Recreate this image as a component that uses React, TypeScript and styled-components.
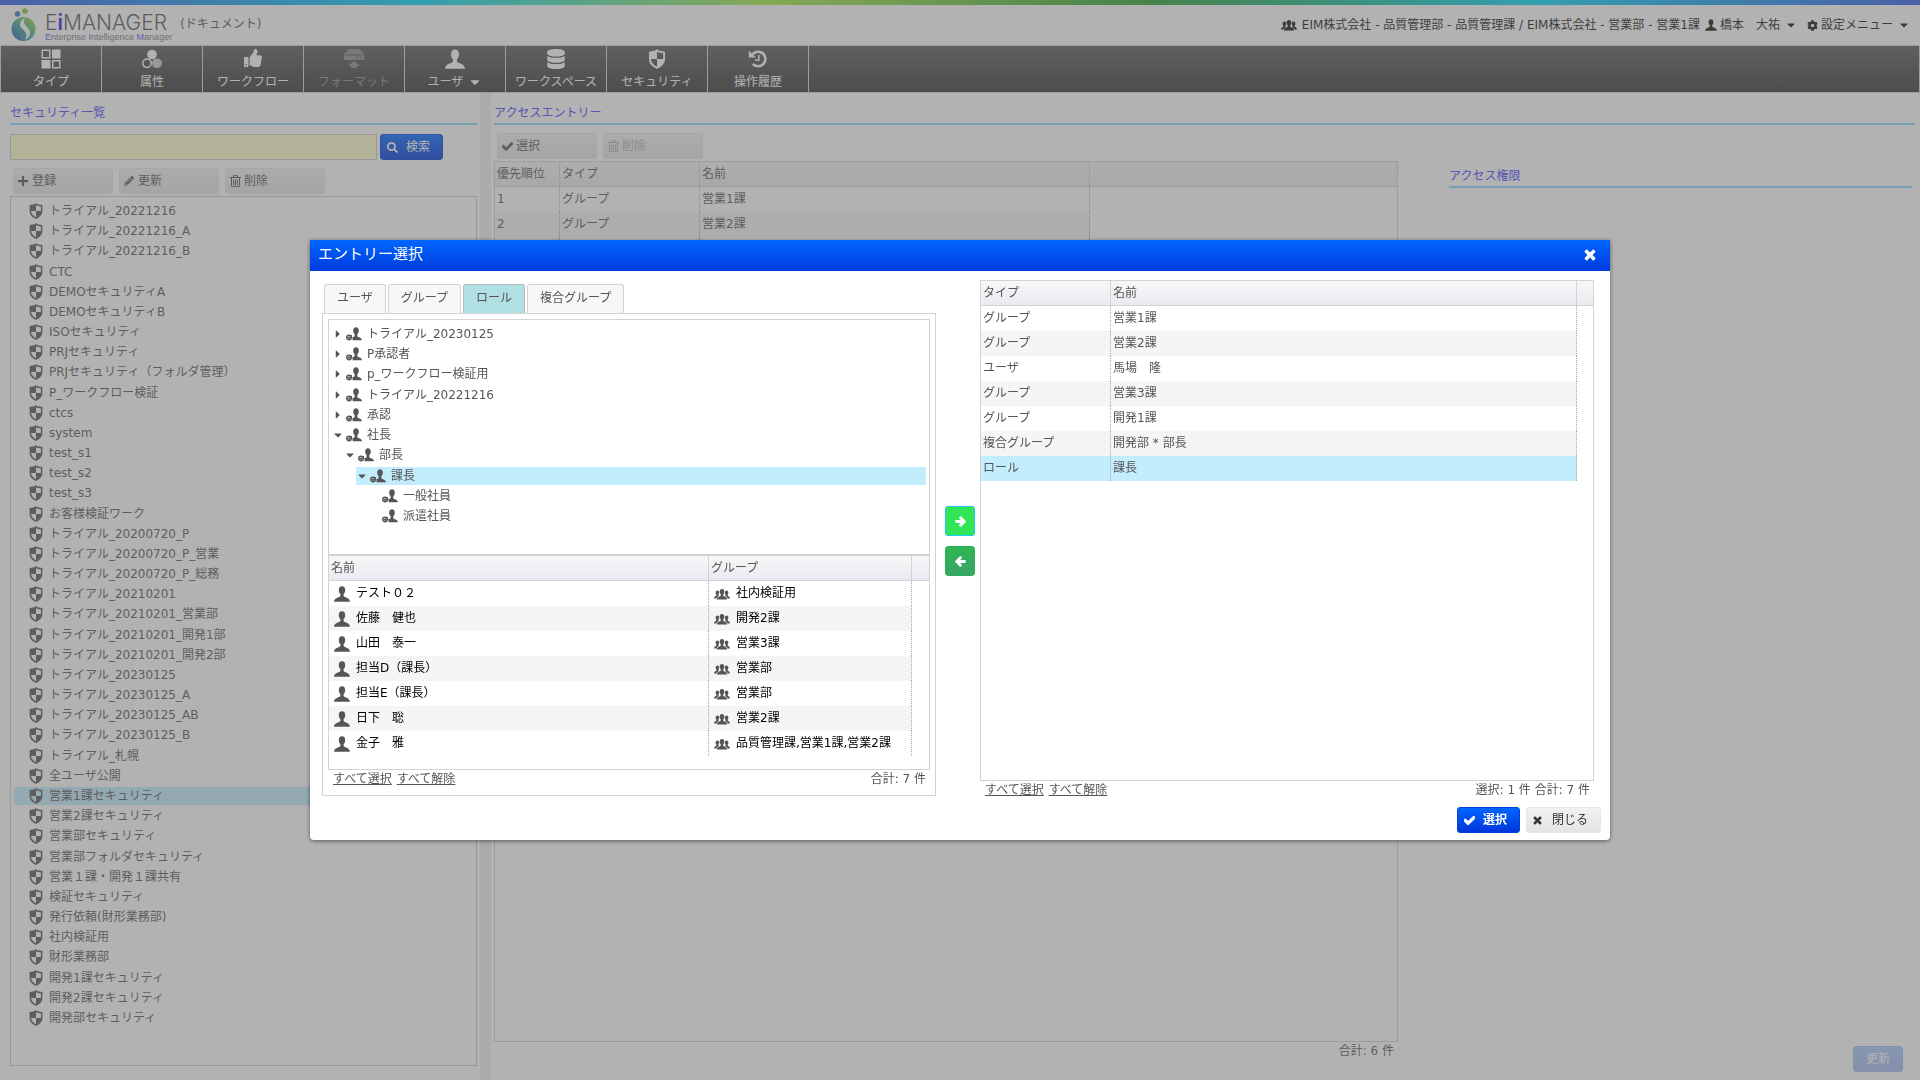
import React, { useState } from "react";
import styled, { createGlobalStyle, css } from "styled-components";
import {
  FaArrowLeft,
  FaArrowRight,
  FaCaretDown,
  FaCaretRight,
  FaCheck,
  FaCog,
  FaDatabase,
  FaPencilAlt,
  FaPlus,
  FaSearch,
  FaThumbsUp,
} from "react-icons/fa";

const GlobalStyle = createGlobalStyle`
  *, *::before, *::after { box-sizing: border-box; }
  body {
    margin: 0;
    background: #fff;
    color: #555;
    font: 12px/18px "DejaVu Sans", "Noto Sans CJK JP", sans-serif;
  }
  button, input { font: inherit; color: inherit; }
  button { cursor: pointer; }
  ul { list-style: none; margin: 0; padding: 0; }
  h1, h2 { margin: 0; font-size: 12px; font-weight: 400; }
  svg { display: block; flex: none; }
`;

/* ---------- icons ---------- */

const ShieldIcon = ({ size = 16 }: { size?: number }) => (
  <svg width={size} height={size} viewBox="0 0 16 16" fill="currentColor">
    <path
      fillRule="evenodd"
      d="M8 0l1.500 1.200 4.900.9V8c0 3.700-2.600 6.200-6.400 8-3.800-1.800-6.400-4.300-6.400-8V2.100l4.900-.9zM8 2.200V8h4.900V3.400L9.400 2.800zM8 8H3.100c.2 2.700 2.100 4.700 4.900 6.200z"
    />
  </svg>
);

const UserIcon = ({ size = 16 }: { size?: number }) => (
  <svg width={size} height={size} viewBox="0 0 16 16" fill="currentColor">
    <path d="M8 .3c2.100 0 3.200 1.600 3.200 3.900 0 1.700-.7 3.200-1.600 3.900v1.500c0 .7.5 1.100 1.200 1.400 2.600 1 4.800 1.700 5.200 4.700H0c.4-3 2.600-3.700 5.200-4.700.7-.3 1.200-.7 1.200-1.400V8.100C5.500 7.400 4.800 5.900 4.800 4.200 4.800 1.900 5.900.3 8 .3z" />
  </svg>
);

const GroupIcon = () => (
  <svg width="16" height="11" viewBox="0 0 16 11" fill="currentColor">
    <path d="M8 0c1.600 0 2.300 1.200 2.300 2.700 0 1.100-.4 2-1 2.600v1.200c0 .4.3.6.7.8 1.600.6 3 1.100 3.200 3.200H2.800c.2-2.100 1.600-2.600 3.200-3.200.4-.2.7-.4.7-.8V5.300c-.6-.6-1-1.500-1-2.600C5.700 1.200 6.400 0 8 0z" />
    <path d="M3.400 1.400c1.200 0 1.800 1 1.800 2.200 0 .9-.3 1.500-.7 1.900v1c0 .3.2.5.5.6-1.200.5-2 1.100-2.500 2.400H0c.2-1.600 1-2 1.800-2.400.4-.2.5-.3.500-.6v-1c-.4-.4-.7-1-.7-1.900 0-1.200.6-2.200 1.800-2.200zM12.600 1.400c1.200 0 1.800 1 1.800 2.200 0 .9-.3 1.500-.7 1.900v1c0 .3.1.4.5.6.8.4 1.600.8 1.800 2.400h-2.500c-.5-1.300-1.300-1.900-2.500-2.400.3-.1.500-.3.500-.6v-1c-.4-.4-.7-1-.7-1.900 0-1.200.6-2.200 1.800-2.200z" />
  </svg>
);

const RoleIcon = () => (
  <svg width="16" height="14" viewBox="0 0 16 14" fill="currentColor">
    <path d="M10 .3c1.800 0 2.800 1.400 2.800 3.400 0 1.400-.6 2.600-1.400 3.200V9c0 .5.4.9 1 1.100 1.600.6 3.400 1.200 3.600 3.200H6.500c.3-1.100.1-2.200-.4-2.900.9-.4 2.500-.8 2.500-1.400V6.900C7.800 6.300 7.200 5.100 7.200 3.700 7.200 1.700 8.200.3 10 .3z" />
    <circle cx="3" cy="10.500" r="2.300" fill="none" stroke="currentColor" strokeWidth="1.400" />
    <path d="M1.800 10l1.300 1.300 2.700-3.100" fill="none" stroke="currentColor" strokeWidth="1.300" />
  </svg>
);

const TypeIcon = () => (
  <svg width="20" height="20" viewBox="0 0 20 20" fill="currentColor">
    <path fillRule="evenodd" d="M.5.5h9v9h-9zM2 2v6h6V2zM11 .5h8.500v9H11zM.5 11h9v8.500h-9zM11 11h8.500v8.500H11zM12.500 12.500V18H18v-5.500z" />
  </svg>
);

const AttributeIcon = () => (
  <svg width="20" height="20" viewBox="0 0 20 20">
    <circle cx="10" cy="5.500" r="4.800" fill="currentColor" />
    <circle cx="5" cy="14.300" r="4.200" fill="none" stroke="currentColor" strokeWidth="1.500" />
    <circle cx="15" cy="14.300" r="4.900" fill="currentColor" opacity=".7" />
  </svg>
);

const FormatIcon = () => (
  <svg width="20" height="20" viewBox="0 0 20 20" fill="currentColor">
    <path fillRule="evenodd" d="M4.500 0h11L20 5.500v4.500c0 .6-.4 1-1 1H1c-.6 0-1-.4-1-1V5.500zM1 5.500v1h18v-1zM12.500 8v1.500H14V8zM16 8v1.500h1.500V8z" />
    <path d="M10 12l6 5h-3v2H7v-2H4z" />
  </svg>
);

const HistoryIcon = () => (
  <svg width="20" height="20" viewBox="0 0 20 20" fill="none" stroke="currentColor">
    <path d="M4.500 5.300A7.300 7.300 0 1 1 4.800 15" strokeWidth="2.600" />
    <path d="M.8 1.500v7h7z" fill="currentColor" stroke="none" />
    <path d="M10.800 6v5.200H7" strokeWidth="1.600" />
  </svg>
);

const TrashIcon = () => (
  <svg width="11" height="12" viewBox="0 0 11 12" fill="none" stroke="currentColor">
    <path d="M0 2.500h11M3.500 2.500V.6h4v1.900M1.500 3v8.400h8V3M3.700 4.500V10M5.500 4.500V10M7.300 4.500V10" />
  </svg>
);

const TimesIcon = ({ size = 11 }: { size?: number }) => (
  <svg width={size} height={size} viewBox="240 370 1310 1180" fill="currentColor">
    <path d="M1490 1322q0 40-28 68l-136 136q-28 28-68 28t-68-28l-294-294-294 294q-28 28-68 28t-68-28l-136-136q-28-28-28-68t28-68l294-294-294-294q-28-28-28-68t28-68l136-136q28-28 68-28t68 28l294 294 294-294q28-28 68-28t68 28l136 136q28 28 28 68t-28 68l-294 294 294 294q28 28 28 68z" />
  </svg>
);

const LogoMark = () => (
  <svg width="26" height="34" viewBox="0 0 26 34">
    <defs>
      <linearGradient id="orb" x1="0" y1="1" x2="1" y2="0">
        <stop offset="0" stopColor="#2458b8" />
        <stop offset=".5" stopColor="#3fa79a" />
        <stop offset="1" stopColor="#b4dc1e" />
      </linearGradient>
    </defs>
    <circle cx="6.500" cy="6" r="2.800" fill="#3c7cc0" />
    <circle cx="14" cy="3" r="2.800" fill="#93c52b" />
    <circle cx="12.500" cy="21" r="12" fill="url(#orb)" />
    <path d="M14 10C9 12 7.500 17 11 20.500c4 3.500 6 6 3 11 5-2 6.500-7 3.500-10.800C14 17 11.500 15 14 10z" fill="#fff" />
  </svg>
);

/* ---------- page frame ---------- */

const Page = styled.div`
  min-height: 100vh;
  display: flex;
  flex-direction: column;
`;

const Rainbow = styled.div`
  height: 5px;
  background: linear-gradient(90deg, #305ae8, #00d8fa 22%, #a8ea44 40%, #28a030 60%, #00d8fa 80%, #305ae8);
`;

const Header = styled.header`
  display: flex;
  align-items: center;
  justify-content: space-between;
  height: 40px;
  padding: 0 10px 0 11px;
  color: #111;
`;

const Brand = styled.div`
  display: flex;
  align-items: center;
  gap: 8px;
`;

const BrandText = styled.div`
  display: grid;
  padding-top: 6px;
  color: #555;
`;

const BrandName = styled.span`
  font: 300 21px/18px Inter, sans-serif;
  b { font-weight: 600; color: #3a1fd0; }
`;

const BrandTag = styled.span`
  font: 9px/10px "Liberation Sans", sans-serif;
  color: #777;
  b { font-weight: 400; color: #5a4ff0; }
`;

const BrandMode = styled.span`
  color: #555;
  padding-bottom: 2px;
`;

const Account = styled.div`
  display: flex;
  align-items: center;
  gap: 5px;
`;

const PlainButton = styled.button`
  display: flex;
  align-items: center;
  gap: 3px;
  padding: 0;
  border: 0;
  background: none;
  svg:last-child { margin-left: 2px; }
  & + & { margin-left: 5px; }
`;

const Menu = styled.nav`
  display: flex;
  height: 48px;
  border: 1px solid #d5d5d5;
  border-width: 1px 1px 1px 0;
  background: linear-gradient(#5a5a5a, #343434);
`;

const MenuItem = styled.button`
  display: grid;
  grid-template-rows: 20px 18px;
  justify-items: center;
  align-content: center;
  gap: 4px;
  width: 101px;
  padding: 2px 0 0;
  border: 0;
  border-left: 1px solid #d5d5d5;
  background: none;
  color: #fff;
  white-space: nowrap;
  &:disabled { color: #8c8c8c; }
  &:last-of-type { width: 102px; border-right: 1px solid #d5d5d5; }
`;

const MenuLabel = styled.span`
  display: flex;
  align-items: center;
  gap: 5px;
`;

const Main = styled.main`
  flex: 1;
  display: grid;
  grid-template-columns: 480px 11px minmax(0, 1fr);
`;

const Splitter = styled.div`
  background: #f0f0f0;
`;

const Title = styled.h2`
  height: 24px;
  line-height: 18px;
  padding-top: 3px;
  border-bottom: 2px solid #82daff;
  color: #4444ff;
`;

const Side = styled.section`
  display: flex;
  flex-direction: column;
  padding: 8px 3px 14px 10px;
`;

const raised = css`
  background: linear-gradient(#f0f2f2, #e4e4e4);
  border: 1px solid #e6e6e6;
  border-radius: 3px;
`;

const primary = css`
  background: linear-gradient(#0066ff, #0036d9);
  border: 1px solid #0040d8;
  border-radius: 3px;
  color: #fff;
`;

const SearchRow = styled.form`
  display: flex;
  gap: 3px;
  margin-top: 9px;
`;

const SearchInput = styled.input`
  width: 367px;
  height: 26px;
  padding: 0 4px;
  border: 1px solid #ccc;
  background: #ffffcc;
`;

const ActionButton = styled.button<{ $primary?: boolean; $bold?: boolean }>`
  display: flex;
  align-items: center;
  gap: ${(p) => (p.$primary ? 8 : 10)}px;
  height: 26px;
  padding: 0 12px 0 6px;
  ${(p) => (p.$primary ? primary : raised)}
  color: ${(p) => (p.$primary ? "#fff" : "#333")};
  font-weight: ${(p) => (p.$bold ? 700 : 400)};
`;

const SaveButton = styled.button`
  ${primary}
  height: 26px;
  padding: 0 12px;
  opacity: 0.35;
`;

const Toolbar = styled.div<{ $gap: number }>`
  display: flex;
  gap: 6px;
  margin-top: ${(p) => p.$gap}px;
  padding-left: 3px;
`;

const ToolButton = styled.button`
  ${raised}
  display: flex;
  align-items: center;
  gap: 3px;
  width: 100px;
  height: 26px;
  padding: 0 3px;
  &:disabled { color: #b4b4b4; }
`;

const ToolIcon = styled.span`
  display: grid;
  place-items: center;
  width: 12px;
`;

const ListBox = styled.div`
  flex: 1;
  margin-top: 2px;
  padding: 5px 3px 38px;
  border: 1px solid #ccc;
`;

const SecurityList = styled.ul`
  display: flex;
  flex-direction: column;
  justify-content: space-between;
  height: 100%;
`;

const ListRow = styled.button<{ $selected: boolean }>`
  display: flex;
  align-items: center;
  gap: 5px;
  width: 100%;
  height: 18px;
  padding: 0 0 0 14px;
  border: 0;
  background: ${(p) => (p.$selected ? "#c3edfc" : "none")};
`;

const Entry = styled.section`
  display: flex;
  flex-direction: column;
  padding: 8px 5px 38px 3px;
`;

const EntryColumns = styled.div`
  flex: 1;
  display: grid;
  grid-template-columns: minmax(0, 904px) minmax(0, 1fr);
  gap: 51px;
  padding-right: 3px;
`;

const EntryTable = styled.div`
  display: flex;
  flex-direction: column;
  margin-bottom: -18px;
`;

const Rights = styled.div`
  display: flex;
  flex-direction: column;
  justify-content: space-between;
  margin-bottom: -30px;
  padding-top: 39px;
`;

const RightsFoot = styled.div`
  display: flex;
  justify-content: flex-end;
  padding-right: 9px;
`;

/* ---------- tables ---------- */

const TableBox = styled.div<{ $height?: number; $gap?: number }>`
  ${(p) => (p.$height ? `height: ${p.$height}px;` : "flex: 1;")}
  margin-top: ${(p) => p.$gap ?? 0}px;
  border: 1px solid #d3d3d3;
  background: #fff;
`;

const Grid = styled.table`
  width: 100%;
  table-layout: fixed;
  border-collapse: separate;
  border-spacing: 0;
`;

const HeadCell = styled.th<{ $width?: number }>`
  width: ${(p) => (p.$width ? `${p.$width}px` : "auto")};
  height: 25px;
  padding: 0 2px;
  border: 0 solid #d3d3d3;
  border-width: 0 1px 1px 0;
  background: linear-gradient(#f7f7f8, #e9ebf0);
  font-weight: 400;
  text-align: left;
  &:last-child { border-right: 0; }
`;

const BodyRow = styled.tr<{ $selected?: boolean; $dark?: boolean }>`
  color: ${(p) => (p.$dark ? "#000" : "inherit")};
  &:nth-child(even) td:not(:last-child) { background: #f5f5f5; }
  ${(p) => p.$selected && css`td:not(:last-child) { background: #c3edfc; }`}
`;

const Cell = styled.td`
  height: 25px;
  padding: 0 2px 2px;
  border-right: 1px dotted #aaa;
  white-space: nowrap;
  &:last-child { border-right: 0; }
`;

const IconText = styled.span<{ $gap: number }>`
  display: flex;
  align-items: center;
  gap: ${(p) => p.$gap}px;
  padding-left: 3px;
  svg { color: #555; margin-top: 3px; }
`;

const Foot = styled.div<{ $tall?: boolean }>`
  display: flex;
  justify-content: space-between;
  padding: 0 4px ${(p) => (p.$tall ? 2 : 0)}px 5px;
`;

const FootEnd = styled.div`
  padding-right: 4px;
  text-align: right;
`;

const FootLinks = styled.div`
  display: flex;
  gap: 5px;
  a { color: #555; }
`;

/* ---------- dialog ---------- */

const Overlay = styled.div`
  position: fixed;
  inset: 0;
  display: flex;
  align-items: center;
  justify-content: center;
  background: rgba(102, 102, 102, 0.5);
`;

const Dialog = styled.div`
  width: min(1300px, 100%);
  border-radius: 0 0 4px 4px;
  background: #fff;
  box-shadow: 0 1px 4px rgba(0, 0, 0, 0.5);
`;

const DialogHead = styled.div`
  display: flex;
  align-items: center;
  justify-content: space-between;
  height: 31px;
  padding: 0 14px 4px 8px;
  background: linear-gradient(#0066ff, #003bdc);
  color: #fff;
  h1 { font-size: 15px; line-height: 24px; }
`;

const CloseButton = styled.button`
  padding: 3px 0 0;
  border: 0;
  background: none;
`;

const DialogBody = styled.div`
  display: grid;
  grid-template-columns: minmax(0, 1fr) 44px minmax(0, 1fr);
  padding: 9px 16px 0 12px;
`;

const Source = styled.div`
  padding-top: 4px;
`;

const Tabs = styled.div`
  display: flex;
  gap: 2px;
  padding-left: 2px;
`;

const Tab = styled.button<{ $active: boolean }>`
  height: 29px;
  padding: 0 12px 2px;
  border: 1px solid ${(p) => (p.$active ? "#b9b9b9" : "#d3d3d3")};
  border-bottom: 0;
  border-radius: 3px 3px 0 0;
  background: ${(p) => (p.$active ? "#b0dfe4" : "#f6f7f9")};
`;

const TabPanel = styled.div`
  padding: 5px;
  border: 1px solid #d3d3d3;
`;

const TreeBox = styled.div`
  height: 236px;
  padding: 5px 3px;
  border: 1px solid #d3d3d3;
`;

const Tree = styled.ul`
  display: flex;
  flex-direction: column;
  justify-content: space-between;
  height: 200px;
`;

const TreeItem = styled.li<{ $depth: number }>`
  padding-left: ${(p) => p.$depth * 12}px;
`;

const TreeRow = styled.button<{ $selected: boolean }>`
  display: flex;
  align-items: center;
  width: 100%;
  height: 18px;
  padding: 0;
  border: 0;
  background: ${(p) => (p.$selected ? "#c3edfc" : "none")};
`;

const Twisty = styled.span`
  display: grid;
  place-items: center;
  width: 12px;
  height: 12px;
  margin-right: 2px;
`;

const TreeLabel = styled.span`
  margin-left: 5px;
`;

const Movers = styled.div`
  display: flex;
  flex-direction: column;
  gap: 10px;
  padding: 226px 5px 0 9px;
`;

const MoveButton = styled.button<{ $focus?: boolean }>`
  display: grid;
  place-items: center;
  height: 30px;
  padding: 0;
  border: 1px solid ${(p) => (p.$focus ? "#1fc8f5" : "#30ad55")};
  border-radius: 3px;
  background: ${(p) => (p.$focus ? "#30e657" : "linear-gradient(#30b454, #38a669)")};
  color: #fff;
`;

const DialogActions = styled.div`
  display: flex;
  justify-content: flex-end;
  gap: 6px;
  padding: 8px 9px 7px;
`;

/* ---------- data ---------- */

const securities = [
  "トライアル_20221216", "トライアル_20221216_A", "トライアル_20221216_B", "CTC",
  "DEMOセキュリティA", "DEMOセキュリティB", "ISOセキュリティ", "PRJセキュリティ",
  "PRJセキュリティ（フォルダ管理）", "P_ワークフロー検証", "ctcs", "system",
  "test_s1", "test_s2", "test_s3", "お客様検証ワーク", "トライアル_20200720_P",
  "トライアル_20200720_P_営業", "トライアル_20200720_P_総務", "トライアル_20210201",
  "トライアル_20210201_営業部", "トライアル_20210201_開発1部", "トライアル_20210201_開発2部",
  "トライアル_20230125", "トライアル_20230125_A", "トライアル_20230125_AB",
  "トライアル_20230125_B", "トライアル_札幌", "全ユーザ公開", "営業1課セキュリティ",
  "営業2課セキュリティ", "営業部セキュリティ", "営業部フォルダセキュリティ",
  "営業１課・開発１課共有", "検証セキュリティ", "発行依頼(財形業務部)", "社内検証用",
  "財形業務部", "開発1課セキュリティ", "開発2課セキュリティ", "開発部セキュリティ",
];

const roles: { name: string; depth: number; state: "closed" | "open" | "leaf" }[] = [
  { name: "トライアル_20230125", depth: 0, state: "closed" },
  { name: "P承認者", depth: 0, state: "closed" },
  { name: "p_ワークフロー検証用", depth: 0, state: "closed" },
  { name: "トライアル_20221216", depth: 0, state: "closed" },
  { name: "承認", depth: 0, state: "closed" },
  { name: "社長", depth: 0, state: "open" },
  { name: "部長", depth: 1, state: "open" },
  { name: "課長", depth: 2, state: "open" },
  { name: "一般社員", depth: 3, state: "leaf" },
  { name: "派遣社員", depth: 3, state: "leaf" },
];

const members = [
  ["テスト０２", "社内検証用"],
  ["佐藤　健也", "開発2課"],
  ["山田　泰一", "営業3課"],
  ["担当D（課長）", "営業部"],
  ["担当E（課長）", "営業部"],
  ["日下　聡", "営業2課"],
  ["金子　雅", "品質管理課,営業1課,営業2課"],
];

const chosen = [
  ["グループ", "営業1課"],
  ["グループ", "営業2課"],
  ["ユーザ", "馬場　隆"],
  ["グループ", "営業3課"],
  ["グループ", "開発1課"],
  ["複合グループ", "開発部 * 部長"],
  ["ロール", "課長"],
];

const entries = chosen.slice(0, 3);

const menu: { label: string; icon: React.ReactNode; caret?: boolean; disabled?: boolean }[] = [
  { label: "タイプ", icon: <TypeIcon /> },
  { label: "属性", icon: <AttributeIcon /> },
  { label: "ワークフロー", icon: <FaThumbsUp size={18} /> },
  { label: "フォーマット", icon: <FormatIcon />, disabled: true },
  { label: "ユーザ", icon: <UserIcon size={20} />, caret: true },
  { label: "ワークスペース", icon: <FaDatabase size={20} /> },
  { label: "セキュリティ", icon: <ShieldIcon size={20} /> },
  { label: "操作履歴", icon: <HistoryIcon /> },
];

const tabs = ["ユーザ", "グループ", "ロール", "複合グループ"];

const SelectLinks = () => (
  <FootLinks>
    <a href="#all">すべて選択</a>
    <a href="#none">すべて解除</a>
  </FootLinks>
);

const EntryDialog = () => {
  const [tab, setTab] = useState("ロール");
  const [role, setRole] = useState("課長");
  return (
    <Dialog role="dialog" aria-modal="true" aria-labelledby="entry-title">
      <DialogHead>
        <h1 id="entry-title">エントリー選択</h1>
        <CloseButton aria-label="閉じる"><TimesIcon size={12} /></CloseButton>
      </DialogHead>
      <DialogBody>
        <Source>
          <Tabs role="tablist">
            {tabs.map((name) => (
              <Tab key={name} role="tab" aria-selected={tab === name} $active={tab === name} onClick={() => setTab(name)}>
                {name}
              </Tab>
            ))}
          </Tabs>
          <TabPanel role="tabpanel">
            <TreeBox>
              <Tree>
                {roles.map((r) => (
                  <TreeItem key={r.name} $depth={r.depth}>
                    <TreeRow $selected={role === r.name} onClick={() => setRole(r.name)}>
                      <Twisty>
                        {r.state === "closed" && <FaCaretRight size={12} />}
                        {r.state === "open" && <FaCaretDown size={12} />}
                      </Twisty>
                      <RoleIcon />
                      <TreeLabel>{r.name}</TreeLabel>
                    </TreeRow>
                  </TreeItem>
                ))}
              </Tree>
            </TreeBox>
            <TableBox $height={215}>
              <Grid>
                <thead>
                  <tr>
                    <HeadCell>名前</HeadCell>
                    <HeadCell $width={203}>グループ</HeadCell>
                    <HeadCell $width={17} />
                  </tr>
                </thead>
                <tbody>
                  {members.map(([name, group]) => (
                    <BodyRow key={name} $dark>
                      <Cell><IconText $gap={6}><UserIcon />{name}</IconText></Cell>
                      <Cell><IconText $gap={6}><GroupIcon />{group}</IconText></Cell>
                      <Cell />
                    </BodyRow>
                  ))}
                </tbody>
              </Grid>
            </TableBox>
            <Foot $tall>
              <SelectLinks />
              <span>合計: 7 件</span>
            </Foot>
          </TabPanel>
        </Source>
        <Movers>
          <MoveButton $focus aria-label="追加"><FaArrowRight size={11} strokeWidth={50} /></MoveButton>
          <MoveButton aria-label="解除"><FaArrowLeft size={11} strokeWidth={50} /></MoveButton>
        </Movers>
        <div>
          <TableBox $height={501}>
            <Grid>
              <thead>
                <tr>
                  <HeadCell $width={130}>タイプ</HeadCell>
                  <HeadCell>名前</HeadCell>
                  <HeadCell $width={16} />
                </tr>
              </thead>
              <tbody>
                {chosen.map(([type, name]) => (
                  <BodyRow key={name} $selected={name === "課長"}>
                    <Cell>{type}</Cell>
                    <Cell>{name}</Cell>
                    <Cell />
                  </BodyRow>
                ))}
              </tbody>
            </Grid>
          </TableBox>
          <Foot>
            <SelectLinks />
            <span>選択: 1 件 合計: 7 件</span>
          </Foot>
        </div>
      </DialogBody>
      <DialogActions>
        <ActionButton $primary $bold><FaCheck size={11} strokeWidth={50} />選択</ActionButton>
        <ActionButton><TimesIcon size={9} />閉じる</ActionButton>
      </DialogActions>
    </Dialog>
  );
};

export default function App() {
  const [current, setCurrent] = useState("営業1課セキュリティ");
  return (
    <>
      <GlobalStyle />
      <Page>
        <Rainbow />
        <Header>
          <Brand>
            <LogoMark />
            <BrandText>
              <BrandName>E<b>i</b>MANAGER</BrandName>
              <BrandTag><b>E</b>nterprise <b>I</b>ntelligence <b>M</b>anager</BrandTag>
            </BrandText>
            <BrandMode>(ドキュメント)</BrandMode>
          </Brand>
          <Account>
            <GroupIcon />
            <span>EIM株式会社 - 品質管理部 - 品質管理課 / EIM株式会社 - 営業部 - 営業1課</span>
            <PlainButton><UserIcon size={12} />橋本　大祐<FaCaretDown size={12} /></PlainButton>
            <PlainButton><FaCog size={11} />設定メニュー<FaCaretDown size={12} /></PlainButton>
          </Account>
        </Header>
        <Menu>
          {menu.map((m) => (
            <MenuItem key={m.label} disabled={m.disabled}>
              {m.icon}
              <MenuLabel>{m.label}{m.caret && <FaCaretDown size={14} />}</MenuLabel>
            </MenuItem>
          ))}
        </Menu>
        <Main>
          <Side>
            <Title>セキュリティ一覧</Title>
            <SearchRow onSubmit={(e) => e.preventDefault()}>
              <SearchInput aria-label="検索" />
              <ActionButton $primary><FaSearch size={11} />検索</ActionButton>
            </SearchRow>
            <Toolbar $gap={8}>
              <ToolButton><ToolIcon><FaPlus size={12} /></ToolIcon>登録</ToolButton>
              <ToolButton><ToolIcon><FaPencilAlt size={10} /></ToolIcon>更新</ToolButton>
              <ToolButton><ToolIcon><TrashIcon /></ToolIcon>削除</ToolButton>
            </Toolbar>
            <ListBox>
              <SecurityList>
                {securities.map((name) => (
                  <li key={name}>
                    <ListRow $selected={name === current} onClick={() => setCurrent(name)}>
                      <ShieldIcon />
                      {name}
                    </ListRow>
                  </li>
                ))}
              </SecurityList>
            </ListBox>
          </Side>
          <Splitter />
          <Entry>
            <Title>アクセスエントリー</Title>
            <EntryColumns>
              <EntryTable>
                <Toolbar $gap={8}>
                  <ToolButton><ToolIcon><FaCheck size={11} strokeWidth={40} /></ToolIcon>選択</ToolButton>
                  <ToolButton disabled><ToolIcon><TrashIcon /></ToolIcon>削除</ToolButton>
                </Toolbar>
                <TableBox $gap={2}>
                  <Grid>
                    <thead>
                      <tr>
                        <HeadCell $width={65}>優先順位</HeadCell>
                        <HeadCell $width={140}>タイプ</HeadCell>
                        <HeadCell $width={390}>名前</HeadCell>
                        <HeadCell />
                      </tr>
                    </thead>
                    <tbody>
                      {entries.map(([type, name], i) => (
                        <BodyRow key={name}>
                          <Cell>{i + 1}</Cell>
                          <Cell>{type}</Cell>
                          <Cell>{name}</Cell>
                          <Cell />
                        </BodyRow>
                      ))}
                    </tbody>
                  </Grid>
                </TableBox>
                <FootEnd>合計: 6 件</FootEnd>
              </EntryTable>
              <Rights>
                <Title>アクセス権限</Title>
                <RightsFoot><SaveButton disabled>更新</SaveButton></RightsFoot>
              </Rights>
            </EntryColumns>
          </Entry>
        </Main>
      </Page>
      <Overlay>
        <EntryDialog />
      </Overlay>
    </>
  );
}
